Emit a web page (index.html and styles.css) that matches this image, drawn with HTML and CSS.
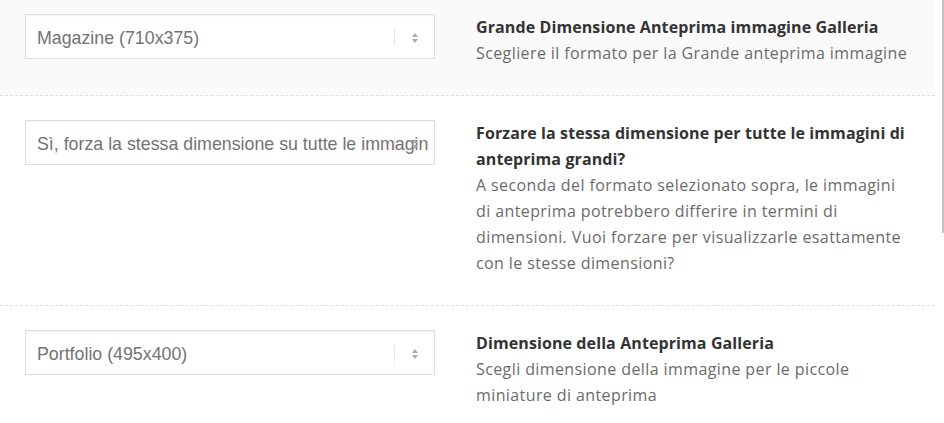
FILE: index.html
```html
<!DOCTYPE html>
<html lang="it">
<head>
<meta charset="utf-8">
<title>Opzioni Galleria</title>
<link rel="stylesheet" href="styles.css">
</head>
<body>
<div class="panel">
  <div class="row row-first row-shaded">
    <div class="field">
      <div class="select">
        <span class="select-text">Magazine (710x375)</span>
        <span class="select-arrow"><svg width="8" height="12" viewBox="0 0 8 12"><path d="M4 1 L7 5 H1 Z M4 11 L7 7 H1 Z" fill="#aaa"/></svg></span>
      </div>
    </div>
    <div class="info">
      <div class="info-title">Grande Dimensione Anteprima immagine Galleria</div>
      <div class="info-desc">Scegliere il formato per la Grande anteprima immagine</div>
    </div>
  </div>
  <div class="row">
    <div class="field">
      <div class="select">
        <span class="select-text">Sì, forza la stessa dimensione su tutte le immagini di anteprima</span>
        <span class="select-arrow"><svg width="8" height="12" viewBox="0 0 8 12"><path d="M4 1 L7 5 H1 Z M4 11 L7 7 H1 Z" fill="#aaa"/></svg></span>
      </div>
    </div>
    <div class="info">
      <div class="info-title">Forzare la stessa dimensione per tutte le immagini di anteprima grandi?</div>
      <div class="info-desc">A seconda del formato selezionato sopra, le immagini di anteprima potrebbero differire in termini di dimensioni. Vuoi forzare per visualizzarle esattamente con le stesse dimensioni?</div>
    </div>
  </div>
  <div class="row row-last">
    <div class="field">
      <div class="select">
        <span class="select-text">Portfolio (495x400)</span>
        <span class="select-arrow"><svg width="8" height="12" viewBox="0 0 8 12"><path d="M4 1 L7 5 H1 Z M4 11 L7 7 H1 Z" fill="#aaa"/></svg></span>
      </div>
    </div>
    <div class="info">
      <div class="info-title">Dimensione della Anteprima Galleria</div>
      <div class="info-desc">Scegli dimensione della immagine per le piccole miniature di anteprima</div>
    </div>
  </div>
</div>
<div class="scroll-indicator"></div>
</body>
</html>
```

FILE: styles.css
```css
html, body {
  margin: 0;
  padding: 0;
  background: #fff;
}
body {
  font-family: "Open Sans", "Noto Sans", sans-serif;
  overflow: hidden;
}
.panel {
  width: 935px;
}
.row {
  display: flex;
  gap: 41px;
  padding: 24px 0 29px 25px;
  border-bottom: 1px dashed #e0e0e0;
}
.row-first {
  padding-top: 14px;
}
.row-shaded {
  background: #fafafa;
}
.row-last {
  border-bottom: none;
}
.field {
  width: 410px;
  flex: none;
}
.select {
  position: relative;
  height: 45px;
  box-sizing: border-box;
  border: 1px solid #dedede;
  background: #fff;
  box-shadow: inset 0 1px 2px rgba(0,0,0,0.05);
  display: flex;
  align-items: center;
  padding: 3px 6px 0 11px;
  overflow: hidden;
}
.select-text {
  font-family: "Liberation Sans", Arial, sans-serif;
  font-size: 17.8px;
  color: #737373;
  white-space: nowrap;
  overflow: hidden;
}
.select-arrow {
  position: absolute;
  right: 0;
  top: 14px;
  width: 39px;
  height: 17px;
  border-left: 1px solid #e6e6e6;
  display: flex;
  align-items: center;
  justify-content: center;
}
.info {
  width: 436px;
  font-size: 16px;
  line-height: 26px;
}
.info-title {
  font-weight: 700;
  color: #333;
  letter-spacing: 0.1px;
}
.info-desc {
  color: #6b6b6b;
  letter-spacing: 0.4px;
}
.scroll-indicator {
  position: fixed;
  right: 0;
  top: 0;
  width: 2px;
  height: 233px;
  background: #c4c4c4;
}
```
